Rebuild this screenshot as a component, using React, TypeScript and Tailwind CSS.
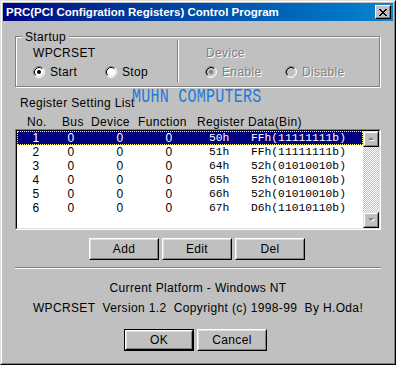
import React from "react";

const ui = "font-['Liberation_Sans',Arial,sans-serif]";
const mono = "font-['Liberation_Mono','Courier_New',monospace]";

type RowData = { no: number; reg: string; data: string };

const rows: RowData[] = [
  { no: 1, reg: "50h", data: "FFh(11111111b)" },
  { no: 2, reg: "51h", data: "FFh(11111111b)" },
  { no: 3, reg: "64h", data: "52h(01010010b)" },
  { no: 4, reg: "65h", data: "52h(01010010b)" },
  { no: 5, reg: "66h", data: "52h(01010010b)" },
  { no: 6, reg: "67h", data: "D6h(11010110b)" },
];

function Radio({ checked, disabled }: { checked?: boolean; disabled?: boolean }) {
  return (
    <svg width="12" height="12" viewBox="0 0 12 12" className="shrink-0">
      <circle cx="6" cy="6" r="5" fill={disabled ? "#c0c0c0" : "#fff"} />
      <path d="M2.11 9.89 A5.5 5.5 0 0 1 9.89 2.11" stroke="#808080" fill="none" />
      <path d="M2.82 9.18 A4.5 4.5 0 0 1 9.18 2.82" stroke="#000" fill="none" />
      <path d="M9.89 2.11 A5.5 5.5 0 0 1 2.11 9.89" stroke="#fff" fill="none" />
      <path d="M9.18 2.82 A4.5 4.5 0 0 1 2.82 9.18" stroke="#dfdfdf" fill="none" />
      {checked && <circle cx="6" cy="6" r="2" fill={disabled ? "#808080" : "#000"} />}
    </svg>
  );
}

function Button({ label, isDefault }: { label: string; isDefault?: boolean }) {
  const face = (
    <div className="flex h-full w-full border border-t-white border-l-white border-r-black border-b-black">
      <div className="flex h-full w-full items-center justify-center border border-t-[#dfdfdf] border-l-[#dfdfdf] border-r-[#808080] border-b-[#808080] text-[12px] text-black">
        {label}
      </div>
    </div>
  );
  if (isDefault) {
    return <div className="h-[22px] w-[70px] border border-black">{face}</div>;
  }
  return <div className="h-[22px] w-[70px]">{face}</div>;
}

function ScrollArrow({ up }: { up?: boolean }) {
  return (
    <div className="h-[16px] w-[16px] border border-t-[#dfdfdf] border-l-[#dfdfdf] border-r-black border-b-black bg-[#c0c0c0]">
      <div className="flex h-full w-full items-center justify-center border border-t-white border-l-white border-r-[#808080] border-b-[#808080]">
        <svg width="9" height="6" viewBox="0 0 9 6">
          {up ? (
            <>
              <polygon points="2,5 5,2 8,5" fill="#fff" />
              <polygon points="1,4 4,1 7,4" fill="#808080" />
            </>
          ) : (
            <>
              <polygon points="2,2 8,2 5,5" fill="#fff" />
              <polygon points="1,1 7,1 4,4" fill="#808080" />
            </>
          )}
        </svg>
      </div>
    </div>
  );
}

export default function App() {
  return (
    <div className={`${ui} h-[365px] w-[396px] border border-t-[#dfdfdf] border-l-[#dfdfdf] border-r-black border-b-black bg-[#c0c0c0] text-[12px] leading-[14px] tracking-[0.35px] text-black`}>
      <div className="flex h-full flex-col border border-t-white border-l-white border-r-[#808080] border-b-[#808080] p-px">
        {/* title bar */}
        <div className="flex h-[18px] items-center justify-between bg-gradient-to-r from-[#000080] to-[#1084d0] pl-[3px] pr-[2px]">
          <span className="text-[11.5px] font-bold tracking-normal text-white">PRC(PCI Configration Registers) Control Program</span>
          <div className="h-[14px] w-[16px] border border-t-white border-l-white border-r-black border-b-black bg-[#c0c0c0]">
            <div className="flex h-full w-full items-center justify-center border border-t-[#c0c0c0] border-l-[#c0c0c0] border-r-[#808080] border-b-[#808080]">
              <svg width="8" height="7" viewBox="0 0 8 7">
                <path d="M0 0 L7 7 M1 0 L8 7 M7 0 L0 7 M8 0 L1 7" stroke="#000" strokeWidth="1" />
              </svg>
            </div>
          </div>
        </div>

        <div className="relative flex flex-col px-[12px]">
          {/* Startup group */}
          <div className="relative mt-[15px] flex h-[51px] w-[365px] border border-[#808080] shadow-[inset_1px_1px_0_#fff,1px_1px_0_#fff]">
            <span className="absolute left-[6px] top-[-7px] bg-[#c0c0c0] px-[3px]">Startup</span>
            <div className="flex w-[161px] flex-col pl-[17px] pt-[9px]">
              <span>WPCRSET</span>
              <div className="mt-[5px] flex h-[14px] items-center">
                <div className="flex w-[72px] items-center gap-[5px]">
                  <Radio checked />
                  <span>Start</span>
                </div>
                <div className="flex items-center gap-[5px]">
                  <Radio />
                  <span>Stop</span>
                </div>
              </div>
            </div>
            <div className="mt-[3px] h-[42px] w-[2px] border-l border-l-[#808080] border-r border-r-white" />
            <div className="flex flex-col pl-[26px] pt-[9px] text-[#808080] [text-shadow:1px_1px_0_#fff]">
              <span className="pl-px">Device</span>
              <div className="mt-[5px] flex h-[14px] items-center">
                <div className="flex w-[80px] items-center gap-[5px]">
                  <Radio checked disabled />
                  <span>Enable</span>
                </div>
                <div className="flex items-center gap-[5px]">
                  <Radio disabled />
                  <span>Disable</span>
                </div>
              </div>
            </div>
          </div>

          <span className="ml-[5px] mt-[9px]">Register Setting List</span>
          <span className="pointer-events-none absolute left-[129px] top-[69px] origin-top-left scale-y-[1.35] font-['Liberation_Mono',monospace] text-[15px] leading-[12px] tracking-[0.25px] text-[#1e7ad8]">
            MUHN COMPUTERS
          </span>

          {/* header */}
          <div className="ml-[12px] mt-[5px] grid grid-cols-[35px_29px_47px_59px_51px_1fr]">
            <span>No.</span>
            <span>Bus</span>
            <span>Device</span>
            <span>Function</span>
            <span>Register</span>
            <span>Data(Bin)</span>
          </div>

          {/* list */}
          <div className="h-[101px] w-[366px] border border-t-[#808080] border-l-[#808080] border-r-white border-b-white">
            <div className="flex h-full border border-t-black border-l-black border-r-[#dfdfdf] border-b-[#dfdfdf] bg-white">
              <div className="flex flex-1 flex-col">
                {rows.map((r) => (
                  <div
                    key={r.no}
                    className={`grid h-[14px] grid-cols-[38px_32px_66px_32px_66px_1fr] items-center ${
                      r.no === 1
                        ? "bg-[#000080] text-white outline-1 outline-dotted -outline-offset-1 outline-[#ffff80]"
                        : "text-black"
                    }`}
                  >
                    <span className="text-center">{r.no}</span>
                    <span className="text-center">0</span>
                    <span className="text-center">0</span>
                    <span className="text-center">0</span>
                    <span className={`${mono} pl-[24px] text-[11.3px] tracking-normal`}>{r.reg}</span>
                    <span className={`${mono} text-[11.3px] tracking-normal`}>{r.data}</span>
                  </div>
                ))}
              </div>
              <div className="flex w-[16px] flex-col">
                <ScrollArrow up />
                <div className="flex-1 bg-[image:repeating-conic-gradient(#c0c0c0_0_25%,#fff_0_50%)] bg-[length:2px_2px]" />
                <ScrollArrow />
              </div>
            </div>
          </div>

          {/* list buttons */}
          <div className="ml-[74px] mt-[8px] flex gap-[3px]">
            <Button label="Add" />
            <Button label="Edit" />
            <Button label="Del" />
          </div>

          <div className="mt-[7px] h-[2px] w-[366px] border-t border-t-[#808080] border-b border-b-white" />

          <span className="mt-[12px] text-center">Current Platform - Windows NT</span>
          <span className="mt-[6px] whitespace-pre text-center">
            WPCRSET  Version 1.2  Copyright (c) 1998-99  By H.Oda!
          </span>

          <div className="ml-[109px] mt-[14px] flex gap-[3px]">
            <Button label="OK" isDefault />
            <Button label="Cancel" />
          </div>
        </div>
      </div>
    </div>
  );
}
